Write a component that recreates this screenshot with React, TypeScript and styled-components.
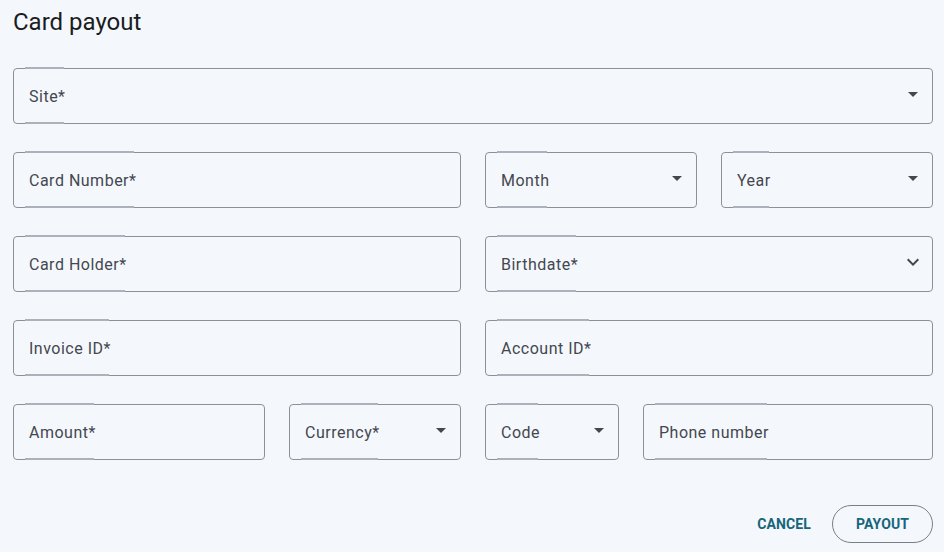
import React, { useLayoutEffect, useRef, useState } from "react";
import styled, { createGlobalStyle } from "styled-components";

const Global = createGlobalStyle`
  html, body { margin: 0; padding: 0; background: #f4f8fd; }
  body { font-family: Roboto, "Noto Sans", Arial, sans-serif; }
  * { box-sizing: border-box; }
`;

const Page = styled.div`
  width: 944px;
  min-height: 552px;
  padding: 8px 11px 0 13px;
  background: #f4f8fd;
  display: flex;
  flex-direction: column;
`;

const Title = styled.h1`
  margin: 0;
  font-size: 24px;
  line-height: 28px;
  font-weight: 400;
  color: #1a1c1e;
`;

const Form = styled.div`
  margin-top: 32px;
  display: flex;
  flex-direction: column;
  gap: 28px;
`;

const Row = styled.div<{ $cols: string }>`
  display: grid;
  grid-template-columns: ${(p) => p.$cols};
  column-gap: 24px;
`;

const FieldBox = styled.div`
  position: relative;
  height: 56px;
  border: 1px solid #8c9199;
  border-radius: 4px;
  display: flex;
  align-items: center;
  padding: 0 16px 0 15px;
`;

const Label = styled.span`
  font-size: 16px;
  letter-spacing: 0.5px;
  color: #44474e;
  white-space: nowrap;
`;

const Notch = styled.span<{ $bottom?: boolean }>`
  position: absolute;
  left: 11px;
  ${(p) => (p.$bottom ? "bottom: -1px;" : "top: -2px;")}
  height: 2px;
  background: #abb2bb;
`;

const Icon = styled.svg`
  position: absolute;
  right: 7px;
  top: 50%;
  margin-top: -14px;
  width: 24px;
  height: 24px;
  fill: #44474e;
`;

type Kind = "none" | "drop" | "chevron";

function Field({ label, kind = "none" }: { label: string; kind?: Kind }) {
  const ref = useRef<HTMLSpanElement>(null);
  const [w, setW] = useState(0);
  useLayoutEffect(() => {
    if (ref.current) setW(ref.current.getBoundingClientRect().width + 2);
  }, [label]);
  return (
    <FieldBox>
      <Notch style={{ width: w }} />
      <Notch $bottom style={{ width: w }} />
      <Label ref={ref}>{label}</Label>
      {kind === "drop" && (
        <Icon viewBox="0 0 24 24">
          <path d="M7 10l5 5 5-5z" />
        </Icon>
      )}
      {kind === "chevron" && (
        <Icon viewBox="0 0 24 24">
          <path d="M16.59 8.59 12 13.17 7.41 8.59 6 10l6 6 6-6z" />
        </Icon>
      )}
    </FieldBox>
  );
}

const Actions = styled.div`
  margin-top: 45px;
  display: flex;
  justify-content: flex-end;
  align-items: center;
  gap: 10px;
`;

const Button = styled.button<{ $outlined?: boolean }>`
  font-family: Roboto, Arial, sans-serif;
  font-size: 14px;
  font-weight: 700;
  letter-spacing: 0.1px;
  text-transform: uppercase;
  color: #17657a;
  background: transparent;
  height: 38px;
  padding: 0 ${(p) => (p.$outlined ? "23px" : "11px")};
  border: ${(p) => (p.$outlined ? "1px solid #7a7f86" : "none")};
  border-radius: 19px;
  cursor: pointer;
`;

export default function App() {
  return (
    <>
      <Global />
      <Page>
        <Title>Card payout</Title>
        <Form>
          <Row $cols="1fr">
            <Field label="Site*" kind="drop" />
          </Row>
          <Row $cols="448px 1fr 1fr">
            <Field label="Card Number*" />
            <Field label="Month" kind="drop" />
            <Field label="Year" kind="drop" />
          </Row>
          <Row $cols="1fr 1fr">
            <Field label="Card Holder*" />
            <Field label="Birthdate*" kind="chevron" />
          </Row>
          <Row $cols="1fr 1fr">
            <Field label="Invoice ID*" />
            <Field label="Account ID*" />
          </Row>
          <Row $cols="252px 172px 134px 1fr">
            <Field label="Amount*" />
            <Field label="Currency*" kind="drop" />
            <Field label="Code" kind="drop" />
            <Field label="Phone number" />
          </Row>
        </Form>
        <Actions>
          <Button>Cancel</Button>
          <Button $outlined>Payout</Button>
        </Actions>
      </Page>
    </>
  );
}
